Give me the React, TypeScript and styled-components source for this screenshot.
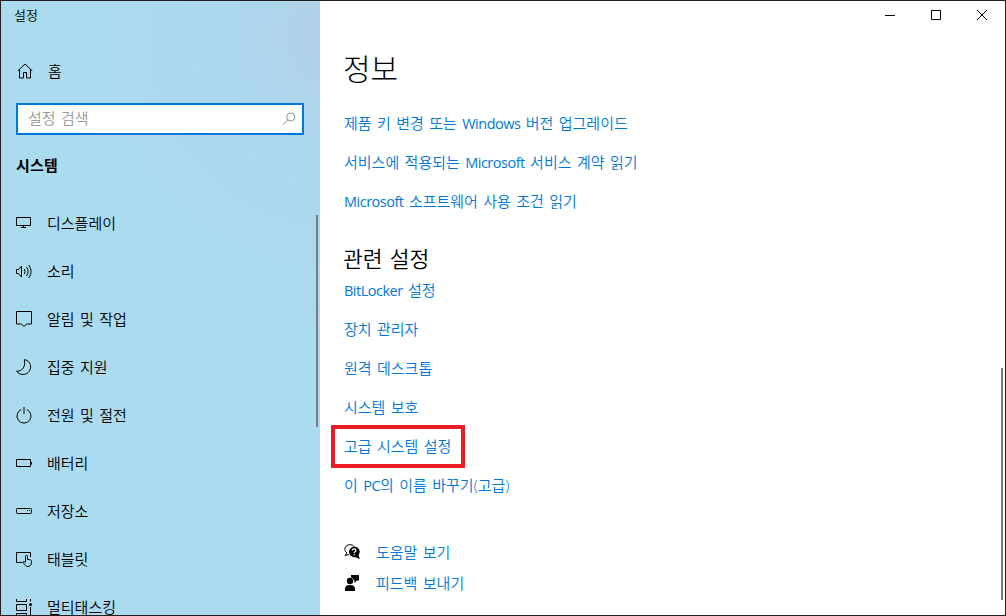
import type { ReactNode } from "react";
import styled, { createGlobalStyle } from "styled-components";

const navItems: { label: string; icon: ReactNode }[] = [
  {
    label: "디스플레이",
    icon: (
      <>
        <path d="M2.5 4.5h14v8h-14z" />
        <path d="M9.5 13v1.5M7 14.5h5" />
      </>
    ),
  },
  {
    label: "소리",
    icon: (
      <>
        <path d="M2.5 8.5h2l3-3.500v11l-3-3.500h-2z" />
        <path d="M10.300 8q1.600 2.500 0 5M12.500 6q3.200 4.500 0 9M14.800 4q4.600 6.500 0 13" />
      </>
    ),
  },
  {
    label: "알림 및 작업",
    icon: <path d="M2.500 2.500h15v12.500h-5l-2.500 2.500-2.500-2.500h-5z" />,
  },
  {
    label: "집중 지원",
    icon: <path d="M10.300 2.600C14.300 3.100 16.800 6.300 16.600 10.200C16.300 14.600 12.700 17.600 8.800 17.500C6.200 17.400 4 16.300 2.600 14.200C8.500 14.500 12 9 10.300 2.600z" />,
  },
  {
    label: "전원 및 절전",
    icon: (
      <>
        <path d="M7.300 4.600A7 7 0 1 0 12.700 4.600" />
        <path d="M10 2v7" />
      </>
    ),
  },
  {
    label: "배터리",
    icon: (
      <>
        <path d="M2.500 6.500h14v7h-14z" />
        <path d="M17.500 9v2.500" />
      </>
    ),
  },
  {
    label: "저장소",
    icon: (
      <>
        <rect x="2.500" y="7.500" width="15" height="5" rx="0.800" />
        <path d="M13 9.500h1M15 9.500h1" />
      </>
    ),
  },
  {
    label: "태블릿",
    icon: (
      <>
        <path d="M8.500 13.500h-6v-10h14V8" />
        <path d="M11.500 13V7.300c0-1.400 2-1.400 2 0V10.500c2.500 0 4 .3 4 2 0 3-.8 5-3.500 5-2.200 0-3.200-1.300-4.800-4-.5-1 .8-1.600 2.300.2" />
      </>
    ),
  },
  {
    label: "멀티태스킹",
    icon: (
      <>
        <path d="M2.500 2v2.500h10V2M2.500 7.500h10v6h-10zM2.500 18v-1.500h10V18M16.500 2v2.500M16.500 10v8" />
        <circle cx="16.500" cy="7.500" r="1.500" fill="#000" stroke="none" />
      </>
    ),
  },
];

const productLinks = [
  "제품 키 변경 또는 Windows 버전 업그레이드",
  "서비스에 적용되는 Microsoft 서비스 계약 읽기",
  "Microsoft 소프트웨어 사용 조건 읽기",
];

const relatedLinks = [
  "BitLocker 설정",
  "장치 관리자",
  "원격 데스크톱",
  "시스템 보호",
  "고급 시스템 설정",
  "이 PC의 이름 바꾸기(고급)",
];

const HIGHLIGHTED = "고급 시스템 설정";

// Latin words are set a little tighter than the Hangul around them
function MixedText({ text }: { text: string }) {
  return text
    .split(/([A-Za-z]+)/)
    .map((part, i) => (i % 2 === 1 ? <Latin key={i}>{part}</Latin> : part));
}

export default function App() {
  return (
    <>
      <GlobalStyle />
      <Window>
        <Sidebar>
          <WindowTitle>설정</WindowTitle>
          <HomeRow>
            <Icon viewBox="0 0 20 20">
              <path d="M2.800 9.800L10 3l7.200 6.800M4.500 8.500v8.500h4v-5.500h3v5.500h4V8.500" />
            </Icon>
            홈
          </HomeRow>
          <SearchBox>
            <SearchInput placeholder="설정 검색" aria-label="설정 검색" />
            <SearchIcon viewBox="0 0 14 14">
              <circle cx="8.700" cy="5" r="4" />
              <path d="M5.800 7.900L1 12.700" />
            </SearchIcon>
          </SearchBox>
          <SectionName>시스템</SectionName>
          <NavList>
            {navItems.map((item) => (
              <NavItem key={item.label}>
                <Icon viewBox="0 0 20 20">{item.icon}</Icon>
                {item.label}
              </NavItem>
            ))}
          </NavList>
          <ScrollThumb $top={214} $height={212} $right={2} />
        </Sidebar>

        <Content>
          <WindowControls>
            <ControlButton aria-label="Minimize">
              <svg width="12" height="12" viewBox="0 0 12 12">
                <path d="M1 6.500h10" />
              </svg>
            </ControlButton>
            <ControlButton aria-label="Maximize">
              <svg width="12" height="12" viewBox="0 0 12 12">
                <path d="M1.500 1.500h9v9h-9z" />
              </svg>
            </ControlButton>
            <ControlButton aria-label="Close">
              <svg width="12" height="12" viewBox="0 0 12 12">
                <path d="M1 1l10 10M11 1L1 11" />
              </svg>
            </ControlButton>
          </WindowControls>

          <PageTitle>정보</PageTitle>
          <LinkList>
            {productLinks.map((label) => (
              <LinkRow key={label}>
                <SettingLink href="#">
                  <MixedText text={label} />
                </SettingLink>
              </LinkRow>
            ))}
          </LinkList>

          <GroupTitle>관련 설정</GroupTitle>
          <LinkList>
            {relatedLinks.map((label) => (
              <LinkRow key={label}>
                <SettingLink href="#">
                  <MixedText text={label} />
                  {label === HIGHLIGHTED && <Highlight />}
                </SettingLink>
              </LinkRow>
            ))}
          </LinkList>

          <Support>
            <SupportRow>
              <SupportIcon viewBox="0 0 16 16">
                <path
                  d="M3 9C.2 7 .2 3.300 3 1.500c2.300-1.500 5.500-1 7 1M3 9L1 11.500l4-1"
                  fill="none"
                  stroke="#000"
                />
                <path d="M10 2.500a5.700 5.300 0 0 1 4.600 8.400l1.200 4.300-4-1.900A5.700 5.300 0 1 1 10 2.500z" />
                <path
                  d="M8.300 6.500c0-2.300 3.600-2.200 3.600 0 0 1.300-1.800 1.400-1.800 2.800M10.100 10.300v1.200"
                  fill="none"
                  stroke="#fff"
                  strokeWidth="1.200"
                />
              </SupportIcon>
              <SettingLink href="#">도움말 보기</SettingLink>
            </SupportRow>
            <SupportRow>
              <SupportIcon viewBox="0 0 16 16">
                <path d="M7 0h8v5.500h-2L10.500 8V5.500H10A4.200 4.200 0 0 0 7 2.200z" />
                <circle cx="6" cy="6" r="3.200" />
                <path d="M1 16v-2.500C1 11 3 10 6 10s5 1 5 3.500V16z" />
              </SupportIcon>
              <SettingLink href="#">피드백 보내기</SettingLink>
            </SupportRow>
          </Support>
          <ScrollThumb $top={367} $height={232} $right={2} />
        </Content>
      </Window>
    </>
  );
}

const GlobalStyle = createGlobalStyle`
  * {
    box-sizing: border-box;
  }

  body {
    margin: 0;
    overflow: hidden;
    font-family: "Open Sans", "Noto Sans CJK KR", sans-serif;
    font-size: 15px;
    font-weight: 350;
    line-height: 20px;
    word-spacing: 1.5px;
    color: #000;
  }
`;

const Window = styled.div`
  display: flex;
  width: 1006px;
  height: 616px;
  overflow: hidden;
  border: 1px solid #231f20;
  background: #fff;
`;

const Sidebar = styled.aside`
  position: relative;
  display: flex;
  flex-direction: column;
  flex: 0 0 319px;
  background:
    radial-gradient(circle at 106% 6%, #b5cfe3 0, rgba(174, 212, 235, 0.7) 85px, transparent 300px),
    #abdbef;
`;

const WindowTitle = styled.div`
  height: 28px;
  padding: 4px 13px;
  font-size: 13px;
`;

const HomeRow = styled.div`
  display: flex;
  align-items: center;
  gap: 13px;
  height: 48px;
  margin-top: 18px;
  padding-left: 14px;
`;

const SearchBox = styled.div`
  display: flex;
  align-items: center;
  height: 32px;
  margin: 8px 16px 0 15px;
  padding: 0 6px 0 10px;
  border: 2px solid #0078d7;
  background: #fff;
`;

const SearchInput = styled.input`
  flex: 1;
  min-width: 0;
  padding: 0 0 2px;
  border: 0;
  outline: 0;
  background: transparent;
  font: inherit;
  word-spacing: inherit;

  &::placeholder {
    color: #999;
  }
`;

const SectionName = styled.div`
  margin-top: 20px;
  padding-left: 15px;
  font-weight: 700;
  letter-spacing: 0.2px;
`;

const NavList = styled.nav`
  flex: 1;
  min-height: 0;
  margin-top: 24px;
  overflow: hidden;
`;

const NavItem = styled.div`
  display: flex;
  align-items: center;
  gap: 13px;
  height: 48px;
  padding-left: 13px;
`;

const Icon = styled.svg`
  flex: none;
  width: 20px;
  height: 20px;
  fill: none;
  stroke: #000;
  stroke-width: 1;
`;

const SearchIcon = styled(Icon)`
  width: 14px;
  height: 14px;
  stroke: #909090;
`;

const ScrollThumb = styled.div<{ $top: number; $height: number; $right: number }>`
  position: absolute;
  top: ${({ $top }) => $top}px;
  right: ${({ $right }) => $right}px;
  width: 2px;
  height: ${({ $height }) => $height}px;
  background: #7a7a7a;
`;

const Content = styled.main`
  position: relative;
  flex: 1;
  padding-left: 24px;
`;

const WindowControls = styled.div`
  display: flex;
  justify-content: flex-end;
  height: 28px;
`;

const ControlButton = styled.button`
  display: flex;
  align-items: center;
  justify-content: center;
  width: 46px;
  padding: 0;
  border: 0;
  background: transparent;

  svg {
    fill: none;
    stroke: #000;
  }
`;

const PageTitle = styled.h1`
  margin: 20px 0 14px -1px;
  font-size: 30px;
  font-weight: 300;
  line-height: 40px;
`;

const LinkList = styled.div`
  display: flex;
  flex-direction: column;
`;

const LinkRow = styled.div`
  display: flex;
  align-items: center;
  height: 39px;
`;

const SettingLink = styled.a`
  position: relative;
  color: #0078d7;
  text-decoration: none;
  white-space: nowrap;
`;

const Latin = styled.span`
  font-size: 14.5px;
  font-weight: 400;
  line-height: 0;
  letter-spacing: -0.5px;
`;

const Highlight = styled.span`
  position: absolute;
  inset: -11px -14px -12px -13px;
  border: 4px solid #ed1c24;
`;

const GroupTitle = styled.h2`
  margin: 23px 0 -5px -1px;
  font-size: 21.5px;
  font-weight: 350;
  line-height: 32px;
`;

const Support = styled.div`
  margin-top: 32px;
`;

const SupportRow = styled.div`
  display: flex;
  align-items: center;
  gap: 16px;
  height: 31px;
`;

const SupportIcon = styled.svg`
  flex: none;
  width: 16px;
  height: 16px;
`;
